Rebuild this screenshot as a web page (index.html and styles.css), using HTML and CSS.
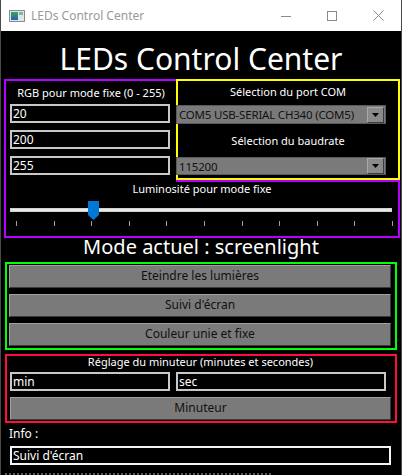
FILE: index.html
```html
<!DOCTYPE html>
<html lang="fr">
<head>
<meta charset="utf-8">
<title>LEDs Control Center</title>
<link rel="stylesheet" href="styles.css">
</head>
<body>
<div class="window">
  <header class="titlebar">
    <svg class="app-icon" width="16" height="12" viewBox="0 0 16 12">
      <defs>
        <linearGradient id="g1" x1="0" y1="0" x2="0" y2="1">
          <stop offset="0" stop-color="#3aa36a"/>
          <stop offset="1" stop-color="#2a5fb0"/>
        </linearGradient>
      </defs>
      <rect x="0.5" y="0.5" width="15" height="11" fill="#dfe6e6" stroke="#8c8c8c"/>
      <rect x="2" y="2" width="7" height="8" fill="url(#g1)"/>
      <rect x="10" y="2" width="4" height="3" fill="#7fb7a0"/>
    </svg>
    <span class="win-title">LEDs Control Center</span>
    <div class="win-controls">
      <span class="win-btn"><svg width="10" height="10" viewBox="0 0 10 10"><path d="M0 5.5H10" stroke="#8a8a8a" stroke-width="1"/></svg></span>
      <span class="win-btn"><svg width="10" height="10" viewBox="0 0 10 10"><rect x="0.5" y="0.5" width="9" height="9" fill="none" stroke="#8a8a8a"/></svg></span>
      <span class="win-btn"><svg width="11" height="11" viewBox="0 0 11 11"><path d="M0.5 0.5L10.5 10.5M10.5 0.5L0.5 10.5" stroke="#8a8a8a" stroke-width="1"/></svg></span>
    </div>
  </header>

  <main class="content">
    <h1 class="heading">LEDs Control Center</h1>

    <section class="frame-purple">
      <div class="rgb-cell">
        <div class="label">RGB pour mode fixe (0 - 255)</div>
        <div class="field rgb-field">20</div>
        <div class="field rgb-field">200</div>
        <div class="field rgb-field">255</div>
      </div>
      <div class="port-cell">
        <div class="frame-yellow">
          <div class="label label-port">Sélection du port COM</div>
          <div class="select"><span class="select-text">COM5 USB-SERIAL CH340 (COM5)</span><span class="select-arrow"><svg width="7" height="4" viewBox="0 0 7 4"><path d="M0 0H7L3.5 4Z" fill="#000"/></svg></span></div>
          <div class="label label-baud">Sélection du baudrate</div>
          <div class="select select-baud"><span class="select-text">115200</span><span class="select-arrow"><svg width="7" height="4" viewBox="0 0 7 4"><path d="M0 0H7L3.5 4Z" fill="#000"/></svg></span></div>
        </div>
      </div>
      <div class="lum-cell">
        <div class="label">Luminosité pour mode fixe</div>
        <div class="slider">
          <div class="track"></div>
          <svg class="thumb" width="11" height="19" viewBox="0 0 11 19"><path d="M0 0H11V14L5.5 19L0 14Z" fill="#0078d7"/></svg>
          <div class="ticks">
            <span></span><span></span><span></span><span></span><span></span><span></span><span></span><span></span><span></span><span></span><span></span>
          </div>
        </div>
      </div>
    </section>

    <div class="mode">Mode actuel : screenlight</div>

    <section class="frame-green">
      <div class="btn">Eteindre les lumières</div>
      <div class="btn">Suivi d'écran</div>
      <div class="btn">Couleur unie et fixe</div>
    </section>

    <section class="frame-red">
      <div class="label">Réglage du minuteur (minutes et secondes)</div>
      <div class="timer-row">
        <div class="field field-min">min</div>
        <div class="field field-sec">sec</div>
      </div>
      <div class="btn btn-timer">Minuteur</div>
    </section>

    <div class="info-label">Info :</div>
    <div class="field info-field">Suivi d'écran</div>
    <div class="status-edge"></div>
  </main>
</div>
</body>
</html>
```
FILE: styles.css
```css
* { box-sizing: border-box; }

html, body {
  margin: 0;
  padding: 0;
  background: #000;
}

body {
  width: 402px;
  height: 475px;
  overflow: hidden;
  font-family: "Noto Sans", "Open Sans", sans-serif;
  font-size: 11px;
  color: #fff;
}

.window {
  width: 402px;
  height: 475px;
  border-left: 1px solid #4a4a4a;
  border-right: 1px solid #4a4a4a;
  background: #000;
  overflow: hidden;
}

/* Title bar */
.titlebar {
  height: 31px;
  background: #fff;
  display: flex;
  align-items: center;
  padding-left: 8px;
}

.app-icon {
  flex: none;
}

.win-title {
  margin-left: 6px;
  font-size: 12px;
  color: #999;
  margin-top: -1px;
}

.win-controls {
  margin-left: auto;
  display: flex;
  height: 31px;
}

.win-btn {
  width: 46px;
  height: 31px;
  display: flex;
  align-items: center;
  justify-content: center;
}

/* Content */
.heading {
  margin: 0;
  padding-top: 8px;
  height: 48px;
  line-height: 40px;
  font-size: 30px;
  font-weight: normal;
  text-align: center;
  color: #fff;
}

.label {
  line-height: 14px;
  text-align: center;
  white-space: nowrap;
}

.field {
  height: 19px;
  border: 2px solid #c8c8c8;
  background: #000;
  color: #fff;
  line-height: 15px;
  padding-left: 1px;
  font-size: 12px;
  white-space: nowrap;
}

/* Purple frame */
.frame-purple {
  margin-left: 3px;
  width: 396px;
  height: 159px;
  border: 2px solid #b400ff;
  display: grid;
  grid-template-columns: 170px 1fr;
  grid-template-rows: auto 1fr;
}

.rgb-cell {
  padding-top: 5px;
}

.rgb-cell .label {
  margin-bottom: 4px;
}

.rgb-field {
  margin-left: 4px;
  width: 160px;
  margin-bottom: 7px;
}

.port-cell {
  margin-top: -2px;
  margin-right: -2px;
  border-bottom: 2px solid #b400ff;
}

.frame-yellow {
  height: 101px;
  border: 2px solid #ffff00;
}

.label-port {
  margin-top: 4px;
}

.select {
  margin-left: -2px;
  width: 210px;
  height: 19px;
  background: #7a7a7a;
  border: 1px solid #5a5a5a;
  display: flex;
  align-items: center;
  color: #111;
  font-size: 11.5px;
}

.label-port + .select {
  margin-top: 6px;
}

.select-text {
  flex: 1;
  padding-left: 2px;
  white-space: nowrap;
  overflow: hidden;
  letter-spacing: -0.2px;
}

.select-arrow {
  flex: none;
  width: 17px;
  height: 16px;
  margin-right: 1px;
  background: #8a8a8a;
  border: 1px solid;
  border-color: #a8a8a8 #3c3c3c #3c3c3c #a8a8a8;
  display: flex;
  align-items: center;
  justify-content: center;
}

.label-baud {
  margin-top: 10px;
}

.select-baud {
  margin-top: 9px;
  height: 18px;
}

.lum-cell {
  grid-column: 1 / 3;
}

.slider {
  position: relative;
  height: 40px;
}

.track {
  position: absolute;
  left: 4px;
  top: 12px;
  width: 382px;
  height: 4px;
  background: #e7e9e6;
  border: 1px solid #cfd2cf;
}

.thumb {
  position: absolute;
  left: 82px;
  top: 5px;
}

.ticks {
  position: absolute;
  left: 10px;
  right: 5px;
  top: 25px;
  height: 5px;
  display: flex;
  justify-content: space-between;
}

.ticks span {
  width: 1px;
  height: 5px;
  background: #a0a0a0;
}

/* Mode */
.mode {
  box-sizing: content-box;
  height: 18px;
  line-height: 18px;
  padding-bottom: 6px;
  font-size: 20px;
  text-align: center;
}

/* Green frame */
.frame-green {
  margin-left: 4px;
  width: 392px;
  border: 2px solid #00ff00;
  padding: 1px 4px 2px 2px;
  display: flex;
  flex-direction: column;
  gap: 6px;
}

.btn {
  height: 23px;
  background: #7a7a7a;
  border: 1px solid;
  border-color: #a0a0a0 #3a3a3a #3a3a3a #a0a0a0;
  color: #111;
  font-size: 12px;
  text-align: center;
  line-height: 20px;
}

/* Red frame */
.frame-red {
  margin-top: 4px;
  margin-left: 4px;
  width: 392px;
  border: 2px solid #ff0d3d;
  padding: 0 4px 1px 3px;
}

.frame-red .label {
  margin-top: -1px;
}

.timer-row {
  margin-top: 3px;
  display: flex;
  gap: 6px;
}

.field-min { width: 160px; }
.field-sec { width: 210px; }

.btn-timer {
  margin-top: 6px;
  width: 381px;
}

/* Info */
.info-label {
  margin-top: 4px;
  margin-left: 8px;
  line-height: 14px;
  font-size: 12px;
}

.info-field {
  margin-top: 5px;
  margin-left: 9px;
  width: 381px;
  border-color: #f4f4f4;
}

.status-edge {
  margin-top: 8px;
  margin-left: 4px;
  width: 266px;
  height: 2px;
  border-top: 2px dotted #5a5a5a;
}
```
